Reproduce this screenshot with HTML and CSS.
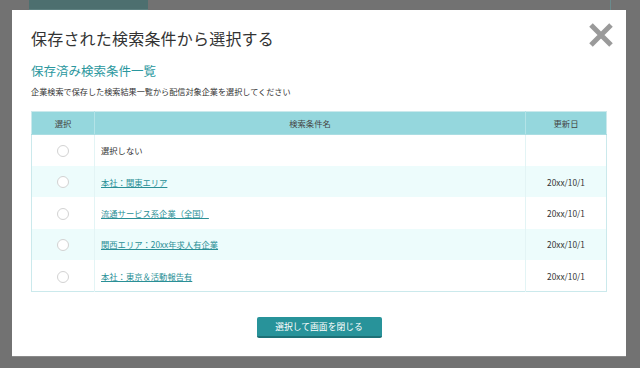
FILE: index.html
```html
<!DOCTYPE html>
<html lang="ja">
<head>
<meta charset="utf-8">
<title>保存された検索条件から選択する</title>
<link rel="stylesheet" href="styles.css">
</head>
<body>
<div class="page-top">
  <div class="page-tab"></div>
  <div class="page-line"></div>
</div>
<div class="modal">
  <button class="close" aria-label="閉じる">
    <svg width="26" height="26" viewBox="0 0 26 26"><path d="M3 3 L23 23 M23 3 L3 23" stroke="#9a9a9a" stroke-width="5" stroke-linecap="butt"/></svg>
  </button>
  <h1 class="title">保存された検索条件から選択する</h1>
  <h2 class="subtitle">保存済み検索条件一覧</h2>
  <p class="desc">企業検索で保存した検索結果一覧から配信対象企業を選択してください</p>
  <table class="list">
    <thead>
      <tr><th class="c-sel">選択</th><th class="c-name">検索条件名</th><th class="c-date">更新日</th></tr>
    </thead>
    <tbody>
      <tr><td class="c-sel"><span class="radio"></span></td><td class="c-name">選択しない</td><td class="c-date"></td></tr>
      <tr class="alt"><td class="c-sel"><span class="radio"></span></td><td class="c-name"><a href="#">本社：関東エリア</a></td><td class="c-date">20xx/10/1</td></tr>
      <tr><td class="c-sel"><span class="radio"></span></td><td class="c-name"><a href="#">流通サービス系企業（全国）</a></td><td class="c-date">20xx/10/1</td></tr>
      <tr class="alt"><td class="c-sel"><span class="radio"></span></td><td class="c-name"><a href="#">関西エリア：20xx年求人有企業</a></td><td class="c-date">20xx/10/1</td></tr>
      <tr><td class="c-sel"><span class="radio"></span></td><td class="c-name"><a href="#">本社：東京＆活動報告有</a></td><td class="c-date">20xx/10/1</td></tr>
    </tbody>
  </table>
  <div class="actions">
    <button class="submit">選択して画面を閉じる</button>
  </div>
</div>
</body>
</html>
```
FILE: styles.css
```css
html, body {
  margin: 0;
  padding: 0;
}
body {
  width: 640px;
  height: 368px;
  overflow: hidden;
  background: #727272;
  font-family: "Noto Sans CJK JP", "Noto Sans", sans-serif;
  color: #333;
}
.page-top {
  display: flex;
  height: 10px;
}
.page-tab {
  margin-left: 29px;
  width: 119px;
  height: 10px;
  background: #4d6f6f;
  box-shadow: inset 0 -1px 0 #5e8080;
}
.page-line {
  margin-left: 462px;
  width: 1px;
  height: 10px;
  background: #6a8a8c;
}
.modal {
  position: relative;
  margin-left: 12px;
  width: 614px;
  height: 346px;
  box-sizing: border-box;
  padding: 16px 19px 0 19px;
  background: #fff;
  box-shadow: 0 1px 0 #8a8a8a;
}
.close {
  position: absolute;
  top: 12px;
  right: 12px;
  width: 26px;
  height: 26px;
  padding: 0;
  border: 0;
  background: none;
}
.close svg {
  display: block;
}
.title {
  margin: 0;
  font-size: 16px;
  line-height: 24px;
  font-weight: 400;
  letter-spacing: 0.2px;
  color: #333;
}
.subtitle {
  margin: 12px 0 0;
  font-size: 12.5px;
  line-height: 18px;
  font-weight: 400;
  color: #2a979e;
}
.desc {
  margin: 6px 0 0;
  font-size: 8.15px;
  line-height: 12px;
  color: #333;
}
.list {
  margin-top: 12.5px;
  width: 576px;
  border-collapse: collapse;
  border: 1px solid #cbe9ec;
  font-size: 8.3px;
  table-layout: fixed;
}
.list th {
  height: 22px;
  padding: 0;
  background: #95d7dd;
  font-weight: 400;
  color: #444;
  border-left: 1px solid #b3e3e7;
  border-bottom: 1px solid #aadde2;
}
.list th:first-child {
  border-left: 0;
}
.list td {
  height: 31.4px;
  padding: 0;
  border-left: 1px solid #e3f4f5;
  color: #333;
}
.list td:first-child {
  border-left: 0;
}
.list tr.alt td {
  background: #edfcfc;
}
.c-sel {
  width: 62px;
  text-align: center;
}
.c-name {
  text-align: left;
}
th.c-name {
  text-align: center;
}
td.c-name {
  padding-left: 6px !important;
}
.c-date {
  width: 80px;
  text-align: center;
}
.list a {
  color: #2a8f96;
  text-decoration: underline;
}
.radio {
  display: inline-block;
  width: 10px;
  height: 10px;
  border: 1px solid #d2d2d2;
  border-radius: 50%;
  background: #fff;
  vertical-align: middle;
}
.actions {
  display: flex;
  justify-content: center;
  margin-top: 25px;
}
.submit {
  width: 125px;
  height: 21px;
  padding: 0;
  border: 0;
  border-bottom: 2px solid #1d7076;
  border-radius: 2px;
  background: #28939a;
  color: #fff;
  font-family: "Noto Sans CJK JP", "Noto Sans", sans-serif;
  font-size: 8.8px;
  line-height: 19px;
}
```
